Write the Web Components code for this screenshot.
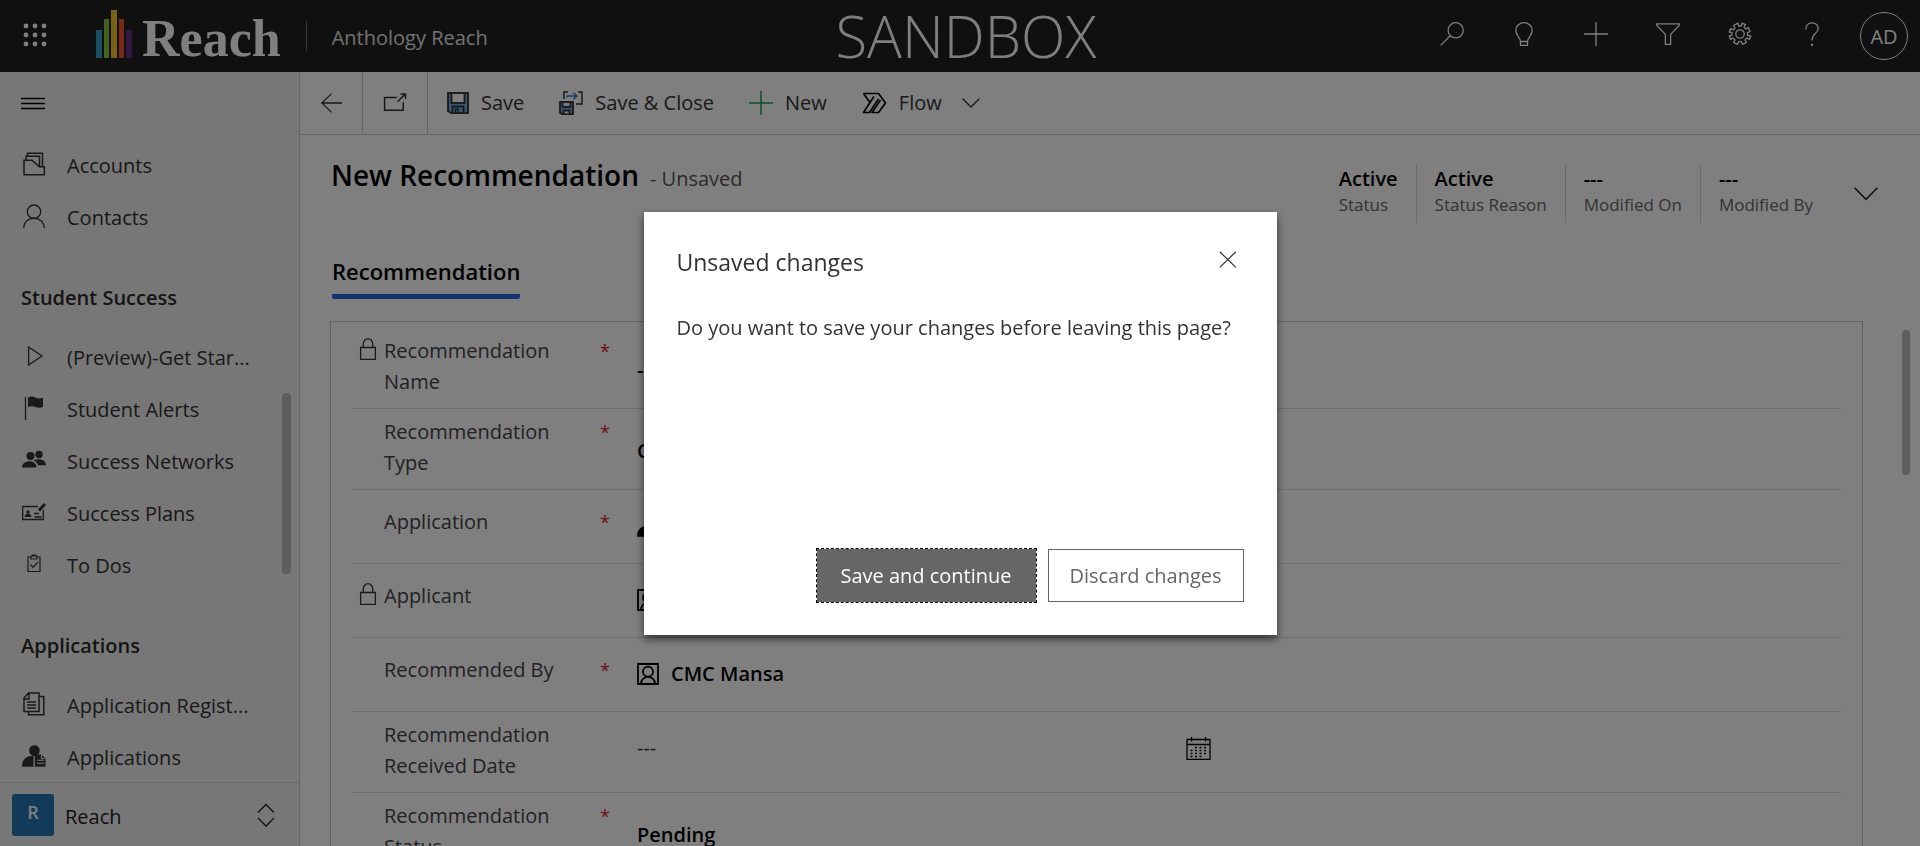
<!DOCTYPE html>
<html lang="en">
<head>
<meta charset="utf-8">
<title>New Recommendation - Anthology Reach</title>
<style>
  html, body { margin: 0; height: 100%; }
  body { font: 20px/28px "Open Sans", "Noto Sans", sans-serif; color: #333; overflow: hidden; }
</style>
</head>
<body>
<reach-app></reach-app>
<script>
const ICONS = {
  waffle: [20, 20, '<g fill="currentColor" stroke="none"><circle cx="2" cy="2" r="2.4"/><circle cx="11" cy="2" r="2.4"/><circle cx="20" cy="2" r="2.4"/><circle cx="2" cy="11" r="2.4"/><circle cx="11" cy="11" r="2.4"/><circle cx="20" cy="11" r="2.4"/><circle cx="2" cy="20" r="2.4"/><circle cx="11" cy="20" r="2.4"/><circle cx="20" cy="20" r="2.4"/></g>'],
  bars: [36, 48, '<g stroke="none"><path fill="#2f9cc4" d="M0 20h6v28H0z"/><path fill="#86c440" d="M8 9h5v39H8z"/><path fill="#f2c32a" d="M15 0h6v48h-6z"/><path fill="#ee5730" d="M23 9h5v39h-5z"/><path fill="#623289" d="M30 20h6v28h-6z"/></g>'],
  search: [24, 24, '<circle cx="15.7" cy="8.3" r="7.6"/><path d="M10.2 13.8L.6 23.4"/>'],
  bulb: [18, 24, '<path d="M5.5 19.500c0-4-4.700-5.500-4.700-11A8.100 7.700 0 0 1 17.200 8.500c0 5.500-4.700 7-4.700 11zM5.500 19.500v3.800h7v-3.800"/>'],
  plus: [24, 24, '<path d="M12 0v24M0 12h24"/>'],
  filter: [24, 24, '<path d="M.8 1.800h22.400v1.600l-8.600 9v9.900H9.400v-9.900L.8 3.400z"/>'],
  gear: [24, 24, '<path d="M10 1.200 10.700 4 12 3.900 13.300 4 14 1.200 17.400 2.600 16 5 17.900 7 20.500 5.600 22 9.500 19.500 10.700v2.600L22.800 14 21.400 17.400 19 16 17 17.900 18.400 20.500 14.500 22.300 13.300 19.600h-2.600L9.500 22.300 5.600 20.500 7 17.900 5 16 2.600 17.400 1.200 14 4 13.300v-2.600L1.200 10 2.600 6.600 5 8 7 6 5.600 3.500z" stroke-linejoin="round"/><circle cx="12" cy="12" r="4.200"/>'],
  help: [14, 24, '<path d="M.8 7.500C.8-1.500 13.200-1 13.200 6.500 13.200 11.500 7 11.500 7 18.500"/><path d="M7 21.800v2.200" stroke-width="2"/>'],
  menu: [24, 12, '<path d="M0 .5h24M0 5.500h24M0 10.500h24"/>'],
  back: [21, 20, '<path d="M10.500 .6L.9 10l9.600 9.400M.9 10H21"/>'],
  popout: [24, 20, '<path d="M14 4.500H1.600v12.800h18.600V9M14.500 8.800l7.500-7.400M17.500 1h5v5" stroke-width="1.500"/>'],
  save: [22, 22, '<path d="M1 1h20v20H4L1 19z" fill="#6fb1e6"/><path d="M4.500 1h13v10h-13z" fill="#fff"/><path d="M5.500 21v-6.500h11V21z" fill="#6fb1e6"/><path d="M8.500 21v-4h2.500v4" /><path d="M1 1h20v20H4L1 19zM4.500 1v10h13V1M5.500 21v-6.500h11V21" stroke-width="1.600"/>'],
  saveclose: [24, 24, '<path d="M1 11h13v12H3l-2-1z" fill="#6fb1e6"/><path d="M3.500 11h8v5h-8zM4.500 23v-3.500h6V23" fill="#dfeefa"/><path d="M1 11h13v12.200H3l-2-1.500zM3.500 11v5h8v-5M4.500 23v-3.500h6V23M5 8V1h4M19 1h4v12h-6" stroke-width="1.500"/><path d="M8 6.500V5h10M14.500 1.800L18 5l-3.500 3.200" stroke="#2f7fc8" stroke-width="1.500"/>'],
  add: [24, 24, '<path d="M12 0v24M0 12h24" stroke="#1f9d4d" stroke-width="1.500"/>'],
  flow: [25, 22, '<g stroke="#000" stroke-width="1.700" stroke-linejoin="round"><path d="M1.500 1.500H16.500L23.500 11l-7 9.500H10L18.500 8"/><path d="M1.500 1.500L8 10.500 1.500 20.500H7.500L16.500 7"/><path d="M8 10.500L12 4.500"/></g>'],
  down: [18, 10, '<path d="M.5 .5L9 9 17.500 .5"/>'],
  bigdown: [24, 14, '<path d="M.6 .8L12 12.400 23.400 .8" stroke-width="1.500"/>'],
  updown: [18, 24, '<path d="M1 9.500L9 1.500l8 8M1 15l8 8 8-8"/>'],
  account: [24, 24, '<path d="M2 9V22.700h20.300v-8h-5L10 8.300H2zM4 8V4.200h13.500V14M5.500 4V1.200h15v13.500" stroke-width="1.500"/>'],
  person: [24, 24, '<circle cx="12" cy="7.700" r="6.700"/><path d="M1.800 24c0-13 20.400-13 20.400 0"/>'],
  play: [24, 24, '<path d="M6.600 3L20 12 6.600 21z"/>'],
  flag: [24, 24, '<path d="M3.500 1v23"/><path d="M6 1.500q4-2 7.500 0t7.500 0V11q-4 1.500-7.500 0T6 11z" fill="currentColor" stroke="none"/>'],
  people: [24, 24, '<g fill="currentColor" stroke="none"><circle cx="8.500" cy="8" r="4"/><circle cx="17" cy="6.500" r="3.700"/><path d="M0 19.500c0-8 14.500-8.500 14.500 0zM11.500 12.300c6-2.500 12.500-.5 12.500 5h-8c-.5-2-2-4-4.500-5z"/></g>'],
  plan: [24, 24, '<path d="M16 6.500H.7v13h20.600V10M12.500 17h7M12 13.500h5" stroke-width="1.300"/><path d="M2.500 17c0-4.500 7-4.500 7 0z" fill="currentColor" stroke="none"/><circle cx="6" cy="12" r="1.700" fill="currentColor" stroke="none"/><path d="M17 10.500L23 4" stroke-width="3"/>'],
  todo: [24, 24, '<path d="M9 5H6v14.500h12V5h-3M9 4h6v3H9zM10.500 4V3h3v1M8.500 12.500l2.500 2.800 5-5.300" stroke-width="1.200"/>'],
  docs: [24, 24, '<path d="M2 6l4.500-5H17v18.500H2zM2.500 7H7V1.500M17 4.500h4.800v18.300H6.500V20M5 10h9M5 13h9M5 16h9" stroke-width="1.500"/>'],
  applicant: [24, 24, '<path d="M11 1.500a5.300 5.300 0 1 1 0 10.200 5.300 5.300 0 0 1 0-10.200zM0 22.700c0-8 5-11 11.500-11v11z" fill="currentColor" stroke="none"/><path d="M12.800 10.500h6.500l4.200 4v8.200H12.800z" fill="currentColor" stroke="none"/><path d="M15 16.200h7M15 19.200h7M19.500 11v3.500H23" stroke="var(--icon-bg,#efefef)" stroke-width="1.100"/>'],
  contact: [22, 22, '<path d="M1 1h20v20H1z" stroke-width="1.800"/><circle cx="11" cy="8.700" r="5" stroke-width="1.800"/><path d="M4 21c0-9.500 14-9.500 14 0" stroke-width="1.800"/>'],
  lock: [16, 22, '<path d="M.6 9.500h14.800v11.900H.6zM3.300 9.500V6a4.700 5.300 0 0 1 9.400 0v3.500"/>'],
  calendar: [25, 24, '<path d="M1 3.500h23v19.800H1zM1 8.500h23M5.500 1v4.500M19.500 1v4.500" stroke-width="1.300"/><path d="M9 11.500h11M4.500 14.500h15.500M4.500 17.500h15.500M4.500 20.500h11" stroke-width="1.500" stroke-dasharray="2 2.500"/>'],
  close: [18, 17, '<path d="M.8 .8l16 15.600M16.800 .8L.8 16.400" stroke-width="1.200"/>']
};

const RESET = '*{box-sizing:border-box}button{font:inherit;color:inherit;background:none;border:0;padding:0;margin:0;cursor:pointer}';

const define = (name, css, html) => customElements.define(name, class extends HTMLElement {
  constructor() {
    super();
    const t = document.createElement('template');
    t.innerHTML = `<style>${RESET}${css}</style>` + (typeof html === 'function' ? html(this) : html);
    this.attachShadow({ mode: 'open' }).append(t.content.cloneNode(true));
  }
});

define('ui-icon', ':host{display:inline-flex;flex:none}svg{display:block;overflow:visible}', el => {
  const [w, h, body] = ICONS[el.getAttribute('name')];
  return `<svg width="${w}" height="${h}" viewBox="0 0 ${w} ${h}" fill="none" stroke="currentColor" stroke-width="1.300" aria-hidden="true">${body}</svg>`;
});

define('top-bar', `
  :host{display:grid;grid-template-columns:1fr auto 1fr;height:72px;background:#202020;color:#fff}
  .left{display:flex;align-items:center}
  .waffle{display:flex;width:70px;padding:0 0 4px 24px}
  .logo{display:flex;align-items:center;gap:10px;margin-left:26px}
  .word{font:bold 52px/60px "Liberation Serif",serif;padding-top:6px}
  .logo ui-icon{padding-bottom:4px}
  .sep{width:1px;height:30px;background:#777;margin:0 25px}
  .env{font-size:58px;line-height:72px;font-weight:300;padding-left:12px}
  .app{color:#e4e4e4;padding-top:4px}
  .right{display:flex;justify-content:flex-end}
  .right button{width:72px;height:68px;display:grid;place-items:center}
  .right .me{height:72px}
  .me span{width:48px;height:48px;border:1px solid #fff;border-radius:50%;line-height:48px}`,
  `<div class="left"><button class="waffle" aria-label="App launcher"><ui-icon name="waffle"></ui-icon></button>
   <div class="logo"><ui-icon name="bars"></ui-icon><span class="word">Reach</span></div><span class="sep"></span><span class="app">Anthology Reach</span></div>
   <div class="env">SANDBOX</div>
   <div class="right">${[['search','Search'],['bulb','Assistant'],['plus','Quick create'],['filter','Advanced find'],['gear','Settings'],['help','Help']].map(([i, l]) => `<button aria-label="${l}"><ui-icon name="${i}"></ui-icon></button>`).join('')}
   <button class="me" aria-label="Account manager"><span>AD</span></button></div>`);

define('nav-item', `
  :host{display:block}
  a{display:flex;align-items:center;height:52px;padding:0 32px 0 22px;gap:21px;color:#333;text-decoration:none}
  ui-icon{padding-bottom:4px}
  span{white-space:nowrap}`,
  el => `<a href="#"><ui-icon name="${el.getAttribute('icon')}"></ui-icon><span><slot></slot></span></a>`);

define('nav-group', `
  :host{display:block}
  h2{margin:0;padding:40px 21px 20px;font-size:20px;line-height:28px;font-weight:600;color:#2a2a2a}`,
  el => `<h2>${el.getAttribute('label')}</h2><slot></slot>`);

define('side-nav', `
  :host{display:flex;flex-direction:column;background:#efefef;border-right:1px solid #ccc;min-height:0}
  .menu{height:68px;flex:none;padding:0 21px 4px;display:flex;align-items:center;color:#000}
  nav{flex:1;min-height:0;overflow:hidden;display:grid;grid-template-columns:1fr 9px;padding-right:9px}
  .thumb{margin-top:253px;height:181px;border-radius:4px;background:#bababa}
  .area{display:flex;align-items:center;flex:none;height:64px;border-top:1px solid #d2d2d2;padding:0 24px 0 12px;gap:11px;color:#222;width:100%;text-align:left}
  .tile{width:42px;height:42px;border-radius:3px;background:#2476b5;color:#fff;font-weight:600;line-height:36px;text-align:center;font-size:18px}
  .name{flex:1;font-weight:500;padding-top:4px}`,
  `<button class="menu" aria-label="Site map"><ui-icon name="menu"></ui-icon></button>
  <nav><div>
    <nav-item icon="account">Accounts</nav-item><nav-item icon="person">Contacts</nav-item>
    <nav-group label="Student Success">
      <nav-item icon="play">(Preview)-Get Star...</nav-item><nav-item icon="flag">Student Alerts</nav-item>
      <nav-item icon="people">Success Networks</nav-item><nav-item icon="plan">Success Plans</nav-item><nav-item icon="todo">To Dos</nav-item>
    </nav-group>
    <nav-group label="Applications">
      <nav-item icon="docs">Application Regist...</nav-item><nav-item icon="applicant">Applications</nav-item>
    </nav-group></div><div class="thumb"></div></nav>
  <button class="area"><span class="tile">R</span><span class="name">Reach</span><ui-icon name="updown"></ui-icon></button>`);

define('command-bar', `
  :host{display:flex;height:63px;border-bottom:1px solid #ccc;background:#fff}
  button{display:flex;align-items:center;justify-content:center;gap:12px;margin-right:35px;color:#333}
  .sq{width:63px;margin:0;border-right:1px solid #ccc}
  .sq.wide{width:65px;margin-right:19px}
  .flow ui-icon + span + ui-icon{margin-left:8px}
  span{white-space:nowrap}`,
  `<button class="sq" aria-label="Back"><ui-icon name="back"></ui-icon></button>
   <button class="sq wide" aria-label="Open in new window"><ui-icon name="popout"></ui-icon></button>
   <button><ui-icon name="save"></ui-icon><span>Save</span></button>
   <button><ui-icon name="saveclose"></ui-icon><span>Save &amp; Close</span></button>
   <button><ui-icon name="add"></ui-icon><span>New</span></button>
   <button class="flow"><ui-icon name="flow"></ui-icon><span>Flow</span><ui-icon name="down"></ui-icon></button>`);

define('header-fact', `
  :host{display:block;padding:0 18px;border-left:1px solid #d4d4d4;height:58px;white-space:nowrap}
  :host(:first-of-type){border-left:0}
  b{display:block;font-size:20px;line-height:28px;font-weight:600;color:#000}
  span{display:block;font-size:17px;line-height:24px;color:#666}`,
  el => `<b><slot></slot></b><span>${el.getAttribute('label')}</span>`);

define('record-header', `
  :host{display:flex;justify-content:space-between;padding:26px 42px 0 31px}
  .title{display:flex;align-items:baseline;gap:11px}
  h1{margin:0;font-size:28px;line-height:28px;font-weight:600;color:#000}
  .state{font-size:20px;color:#555}
  .facts{display:flex;align-items:center;padding-top:4px}
  .more{padding:0 0 0 23px;color:#222}`,
  `<div class="title"><h1>New Recommendation</h1><span class="state">- Unsaved</span></div>
   <div class="facts"><header-fact label="Status">Active</header-fact><header-fact label="Status Reason">Active</header-fact>
   <header-fact label="Modified On">---</header-fact><header-fact label="Modified By">---</header-fact>
   <button class="more" aria-label="More header fields"><ui-icon name="bigdown"></ui-icon></button></div>`);

define('form-field', `
  :host{display:grid;grid-template-columns:24px 216px 37px 574px;padding:7px 8px 0;height:81px;border-bottom:1px solid #d8d8d8}
  :host([single]){padding-top:16px;height:74px}
  :host([last]){border:0}
  label{font-size:20px;line-height:31px;color:#444;padding-right:40px}
  .req{color:#e0202c;font-size:18px;line-height:32px}
  .val{display:flex;align-items:center;gap:12px;color:#000;font-weight:600;height:70px}
  .val.date{height:58px}
  :host([single]) .val{height:40px}
  input,select{all:unset;flex:1;min-width:0;font-weight:600;line-height:28px;height:28px}
  .lock ui-icon{padding-top:3px}
  .date input{font-weight:400;color:#333}`,
  el => {
    const a = n => el.getAttribute(n);
    const control = a('type') === 'select'
      ? `<select id="f"><option>${a('value')}</option></select>`
      : `<input id="f" value="${a('value') || ''}">`;
    return `<span class="lock">${a('locked') !== null ? '<ui-icon name="lock"></ui-icon>' : ''}</span>
      <label for="f">${a('label')}</label>
      <span class="req">${a('required') !== null ? '*' : ''}</span>
      <span class="val ${a('type') || ''}">${a('icon') ? `<ui-icon name="${a('icon')}"></ui-icon>` : ''}${control}${a('type') === 'date' ? '<ui-icon name="calendar"></ui-icon>' : ''}</span>`;
  });

define('record-form', `
  :host{display:grid;grid-template-columns:1fr 8px;column-gap:39px;padding:0 10px 0 30px;min-height:0;flex:1;overflow:hidden}
  .tab{display:block;width:max-content;margin:33px 0 22px 2px;padding-bottom:8px;border-bottom:5px solid #2266e3;border-radius:2px;font-size:22px;line-height:30px;font-weight:600;color:#000}
  section{border:1px solid #c6c6c6;padding:6px 21px;--icon-bg:#fff}
  .thumb{height:145px;margin-top:107px;border-radius:4px;background:#bdbdbd}`,
  `<div><button class="tab" role="tab" aria-selected="true">Recommendation</button>
  <section>
    <form-field label="Recommendation Name" locked required value="---"></form-field>
    <form-field label="Recommendation Type" required type="select" value="C"></form-field>
    <form-field single label="Application" required icon="applicant"></form-field>
    <form-field single label="Applicant" locked icon="contact"></form-field>
    <form-field single label="Recommended By" required icon="contact" value="CMC Mansa"></form-field>
    <form-field label="Recommendation Received Date" type="date" value="---"></form-field>
    <form-field last label="Recommendation Status" required type="select" value="Pending"></form-field>
  </section></div><div class="thumb"></div>`);

define('unsaved-dialog', `
  :host{position:fixed;inset:0;display:grid;place-items:center;background:rgba(0,0,0,.5)}
  dialog{position:static;margin:0;border:0;width:633px;min-height:423px;padding:33px 33px 32px;display:flex;flex-direction:column;background:#fff;color:#333;box-shadow:0 4px 8px rgba(0,0,0,.6)}
  header{display:flex;justify-content:space-between;padding-right:7px}
  header button{display:flex;height:30px;align-items:center}
  h2{margin:0;font-size:23px;line-height:34px;font-weight:400}
  p{margin:35px 0 0;font-size:20px;line-height:28px;white-space:nowrap}
  footer{display:flex;justify-content:flex-end;align-items:center;gap:11px;margin-top:auto}
  footer button{height:53px;width:196px;border:1px solid #666;color:#666;white-space:nowrap;padding-top:2px}
  footer .primary{height:55px;width:221px;background:#666;color:#fff;border:1px dashed #000;background-clip:padding-box}`,
  `<dialog open aria-labelledby="t"><header><h2 id="t">Unsaved changes</h2><button aria-label="Close"><ui-icon name="close"></ui-icon></button></header>
   <p>Do you want to save your changes before leaving this page?</p>
   <footer><button class="primary">Save and continue</button><button>Discard changes</button></footer></dialog>`);

define('reach-app', `
  :host{display:grid;grid-template:auto minmax(0,1fr)/300px minmax(0,1fr);height:100vh;background:#fff}
  top-bar{grid-column:1/-1}
  main{display:flex;flex-direction:column;min-height:0;min-width:0}`,
  `<top-bar></top-bar><side-nav></side-nav>
   <main><command-bar></command-bar><record-header></record-header><record-form></record-form></main>
   <unsaved-dialog></unsaved-dialog>`);
</script>
</body>
</html>
